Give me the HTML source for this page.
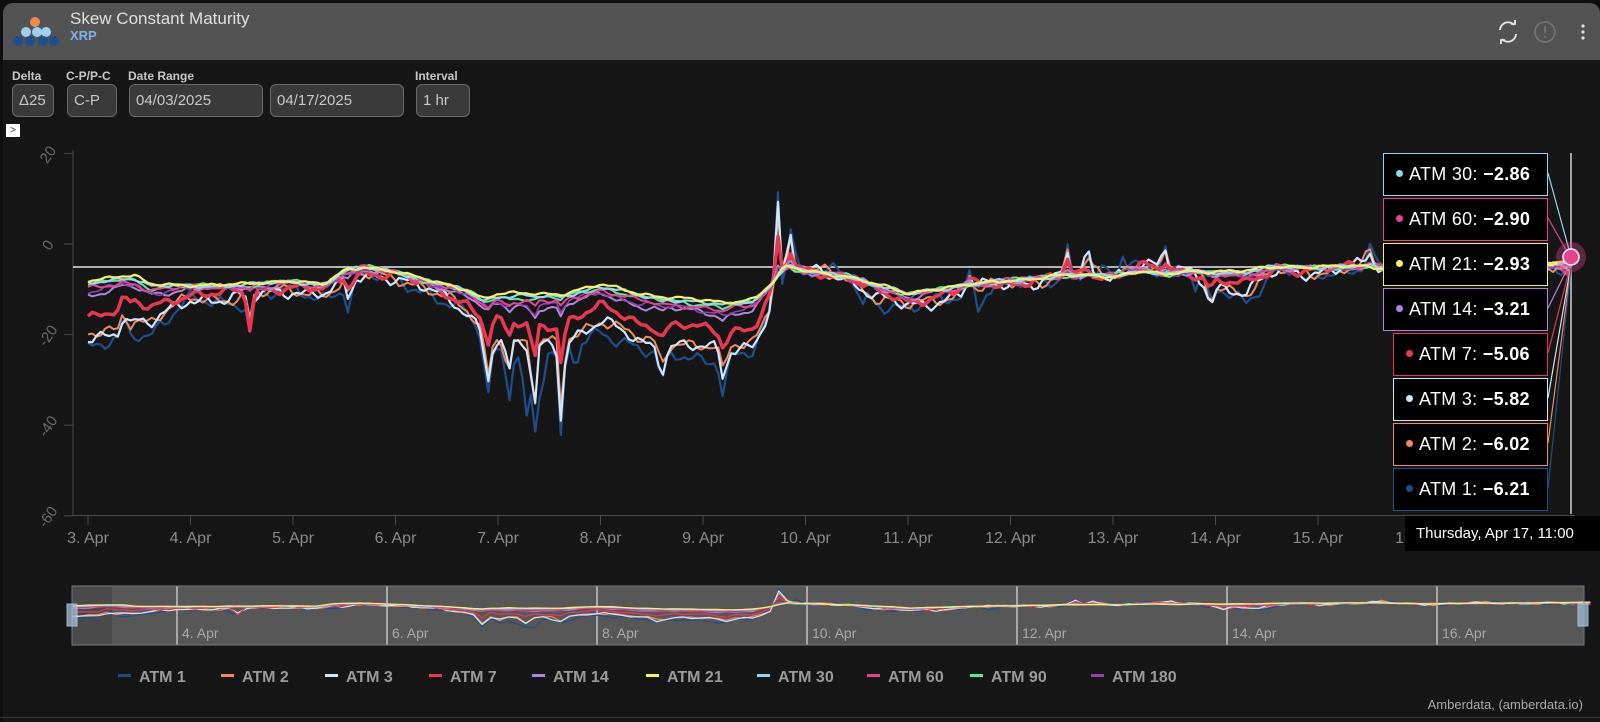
<!DOCTYPE html>
<html><head><meta charset="utf-8">
<style>
*{margin:0;padding:0;box-sizing:border-box}
html,body{width:1600px;height:722px;overflow:hidden;background:#0e0e0e;font-family:"Liberation Sans",sans-serif}
#panel{position:absolute;left:3px;top:3px;width:1597px;height:719px;background:#161616;border-radius:10px 10px 0 0;overflow:hidden}
#hdr{position:absolute;left:0;top:0;width:100%;height:57px;background:#535353}
.t1{position:absolute;left:67px;top:6px;font-size:17px;color:#e0e0e0}
.t2{position:absolute;left:67px;top:25px;font-size:13px;color:#7fb2e8;font-weight:bold}
.lbl{position:absolute;top:66px;font-size:12px;font-weight:bold;color:#c8c8c8}
.inp{position:absolute;top:81px;height:33px;border:1px solid #6a6a6a;border-radius:6px;background:#3a3a3a;color:#c8c8c8;font-size:15px;line-height:31px;padding-left:6px}
svg{position:absolute;left:0;top:0}
.tip{position:absolute;height:43px;background:#000;border:1.5px solid;color:#fff;font-size:18px;line-height:40px;padding-left:12px;white-space:nowrap;letter-spacing:0.3px}
.tip i{display:inline-block;width:7px;height:7px;border-radius:50%;margin-right:6px;vertical-align:3px}
.tip b{font-weight:bold}
.leg{position:absolute;top:669px;font-size:16px;font-weight:bold;color:#9a9a9a;white-space:nowrap}
.leg s{display:inline-block;width:13px;height:3px;vertical-align:5px;margin-right:8px;text-decoration:none}
</style></head><body>
<div id="panel">
<div id="hdr">
 <div class="t1">Skew Constant Maturity</div>
 <div class="t2">XRP</div>
</div>
<div class="lbl" style="left:9px">Delta</div>
<div class="lbl" style="left:63px">C-P/P-C</div>
<div class="lbl" style="left:125px">Date Range</div>
<div class="lbl" style="left:412px">Interval</div>
<div class="inp" style="left:9px;width:42px">Δ25</div>
<div class="inp" style="left:64px;width:50px">C-P</div>
<div class="inp" style="left:126px;width:134px">04/03/2025</div>
<div class="inp" style="left:267px;width:134px">04/17/2025</div>
<div class="inp" style="left:413px;width:54px">1 hr</div>
<div style="position:absolute;left:3px;top:121px;width:14px;height:13px;background:#fff;color:#333;font-size:10px;line-height:13px;text-align:center">&gt;</div>
</div>
<svg id="s" width="1600" height="722" xmlns="http://www.w3.org/2000/svg">
 <circle cx="35" cy="22" r="5" fill="#f08a4b"/>
 <circle cx="26" cy="32" r="5" fill="#9fd0ef"/><circle cx="37" cy="32" r="5" fill="#9fd0ef"/><circle cx="46" cy="32" r="5" fill="#9fd0ef"/>
 <circle cx="18" cy="41" r="5" fill="#1f4e8c"/><circle cx="30" cy="41" r="5" fill="#1f4e8c"/><circle cx="43" cy="41" r="5" fill="#1f4e8c"/><circle cx="54" cy="41" r="5" fill="#1f4e8c"/>
 <g fill="none" stroke="#e6e6e6" stroke-width="1.8">
  <path d="M1500 30a8 8 0 0 1 14-5M1516 34a8 8 0 0 1-14 5"/>
  <path d="M1511 24h4v-4M1505 40h-4v4"/>
 </g>
 <circle cx="1545" cy="32" r="10" fill="none" stroke="#777" stroke-width="1.5"/>
 <line x1="1545" y1="26" x2="1545" y2="33" stroke="#777" stroke-width="1.6"/><circle cx="1545" cy="37" r="1" fill="#777"/>
 <circle cx="1583" cy="26" r="1.6" fill="#ddd"/><circle cx="1583" cy="32" r="1.6" fill="#ddd"/><circle cx="1583" cy="38" r="1.6" fill="#ddd"/>
 <line x1="73" y1="150" x2="73" y2="516" stroke="#4a4a4a"/>
 <line x1="73" y1="515.5" x2="1575" y2="515.5" stroke="#4a4a4a"/>
 <g stroke="#4a4a4a" id="ticks"></g>
 <g fill="#6a6a6a" font-size="15" id="ylab"></g>
 <g fill="#8a8a8a" font-size="16" id="xlab"></g>
 <line x1="73" y1="267" x2="1570" y2="267" stroke="#e8e8e8" stroke-width="1.6"/>
 <defs><clipPath id="cp"><rect x="74" y="140" width="1500" height="375"/></clipPath></defs>
 <g id="lines" clip-path="url(#cp)" fill="none" stroke-linejoin="round"></g>
 <rect x="72" y="586" width="1512" height="59" fill="#575757"/>
 <rect x="72" y="586" width="40" height="59" fill="#4a4a4a"/>
 <g id="navt"></g>
 <g id="nav" fill="none" stroke-width="1.2"></g>
 <rect x="72" y="586" width="1512" height="59" fill="none" stroke="#6f7a86"/>
 <rect x="67" y="604" width="10" height="22" fill="#9bb7d2" stroke="#c8d8ea" opacity=".8"/>
 <rect x="1578" y="604" width="10" height="22" fill="#9bb7d2" stroke="#c8d8ea" opacity=".8"/>
 <line x1="0" y1="717.5" x2="1600" y2="717.5" stroke="#3a3a3a"/>
 <text x="1583" y="709" fill="#aaa" font-size="13" text-anchor="end">Amberdata, (amberdata.io)</text>
 <line x1="1571" y1="153" x2="1571" y2="514" stroke="#d0d0d0" stroke-width="1.5"/>
 <g id="conn" stroke-width="1.2"></g>
 <circle cx="1571" cy="257" r="15" fill="#e84393" opacity=".35"/>
 <circle cx="1571" cy="257" r="8" fill="#e84393" stroke="#fff" stroke-width="1.5"/>
</svg>
<div id="tips"></div>
<div style="position:absolute;left:1405px;top:516px;width:195px;height:35px;background:#000;color:#fff;font-size:15px;line-height:35px;padding-left:11px">Thursday, Apr 17, 11:00</div>
<div id="legend">
<div class="leg" style="left:118px"><s style="background:#1f4e8c"></s>ATM 1</div>
<div class="leg" style="left:221px"><s style="background:#f08a5d"></s>ATM 2</div>
<div class="leg" style="left:325px"><s style="background:#cfe6ff"></s>ATM 3</div>
<div class="leg" style="left:429px"><s style="background:#e8384f"></s>ATM 7</div>
<div class="leg" style="left:532px"><s style="background:#b185db"></s>ATM 14</div>
<div class="leg" style="left:646px"><s style="background:#f5f26a"></s>ATM 21</div>
<div class="leg" style="left:757px"><s style="background:#8fd9f0"></s>ATM 30</div>
<div class="leg" style="left:867px"><s style="background:#e84393"></s>ATM 60</div>
<div class="leg" style="left:970px"><s style="background:#5ee89a"></s>ATM 90</div>
<div class="leg" style="left:1091px"><s style="background:#8e44ad"></s>ATM 180</div>
</div>
<script>
var NS="http://www.w3.org/2000/svg";
function el(p,t,a,txt){var e=document.createElementNS(NS,t);for(var k in a)e.setAttribute(k,a[k]);if(txt)e.textContent=txt;document.getElementById(p).appendChild(e);return e;}
function Y(v){return 244-v*4.53}
function X(d){return 88+d*102.5}
[20,0,-20,-40,-60].forEach(function(v){var y=Y(v);el("ticks","line",{x1:64,y1:y,x2:73,y2:y});
 el("ylab","text",{x:0,y:0,transform:"translate(52,"+(y+4)+") rotate(-55)","text-anchor":"middle"},""+v);});
var days=["3. Apr","4. Apr","5. Apr","6. Apr","7. Apr","8. Apr","9. Apr","10. Apr","11. Apr","12. Apr","13. Apr","14. Apr","15. Apr","16. Apr"];
days.forEach(function(s,i){var x=X(i);el("ticks","line",{x1:x,y1:516,x2:x,y2:525});el("xlab","text",{x:x,y:543,"text-anchor":"middle"},s);});
var K=[[0,-8,-21],[0.3,-7,-19],[0.45,-7,-17],[0.6,-9,-18],[1,-9,-12],[1.5,-9,-12],[2,-8,-10],[2.3,-9,-11],[2.5,-6,-9],[2.7,-5,-7],[3,-6,-7],[3.3,-8,-10],[3.7,-10,-15],[3.85,-12,-19],[4,-11,-21],[4.3,-11,-23],[4.6,-11,-22],[5,-9,-17],[5.4,-11,-22],[5.8,-12,-22],[6.2,-13,-24],[6.5,-12,-22],[6.7,-8,-11],[6.8,-5,-5],[7,-6,-6],[7.4,-7,-7],[7.7,-9,-12],[8,-11,-14],[8.2,-10,-13],[8.6,-9,-10],[9,-8,-9],[9.5,-7,-7],[10,-7,-7],[10.3,-6,-4],[10.5,-7,-6],[10.7,-6,-6],[11,-6,-9],[11.3,-6,-11],[11.6,-5,-6],[12,-5,-6],[12.5,-5,-5],[13,-6,-6],[13.5,-5,-5],[14,-5,-5],[14.46,-4,-6]];
function base(t){for(var i=1;i<K.length;i++){if(t<=K[i][0]){var a=K[i-1],b=K[i],f=(t-a[0])/(b[0]-a[0]);return [a[1]+(b[1]-a[1])*f,a[2]+(b[2]-a[2])*f];}}var l=K[K.length-1];return [l[1],l[2]];}
var SP=[[0.35,0.03,4],[1.58,0.03,-6],[2.55,0.03,-5],[3.9,0.04,-10],[4.1,0.03,-8],[4.35,0.03,-16],[4.62,0.03,-17],[5.6,0.05,-5],[6.2,0.04,-6],[6.72,0.025,22],[6.85,0.03,7],[8.6,0.04,3],[9.55,0.03,6],[9.75,0.04,4],[10.5,0.03,5],[10.95,0.04,-4],[12.5,0.04,3]];
var S=[["#1f4e8c",1.2,2.2,1],["#f08a5d",0.95,2,2],["#cfe6ff",1,2.2,3],["#e8384f",0.6,3.5,4],["#b185db",0.25,2,5],["#8e44ad",0.2,1.6,6],["#5ee89a",0.08,2,7],["#e84393",0.15,2,8],["#8fd9f0",0.05,2.2,9],["#f5f26a",0,2.2,10]];
var N=348,tmax=14.46;
S.forEach(function(s){var k=s[1],seed=s[3],pts=[],v=[];
 for(var i=0;i<=N;i++){var t=i/N*tmax;var b=base(t);var val=b[0]+(b[1]-b[0])*k;
  var amp=0.4+k*1.1;
  val+=amp*(Math.sin(t*19+seed*1.7)*0.6+Math.sin(t*43+seed*3.1)*0.35+Math.sin(t*7+seed)*0.5);
  SP.forEach(function(p){var d=(t-p[0])/p[1];val+=p[2]*Math.pow(k,1.3)*Math.exp(-d*d);});
  if(seed==1){[[4.27,-14],[4.42,-10],[4.76,-6],[7.55,-5],[8.7,-5],[10.1,4],[10.8,-4],[6.9,4]].forEach(function(p){var d=(t-p[0])/0.03;val+=p[1]*Math.exp(-d*d);});}
  if(seed==4){var d=(t-1.58)/0.04;val-=5*Math.exp(-d*d);}
  v.push(val);pts.push(X(t).toFixed(1)+","+Y(val).toFixed(1));}
 el("lines","polyline",{points:pts.join(" "),stroke:s[0],"stroke-width":s[2]});
 var np=[];for(var i=0;i<=N;i+=2){var t=i/N*tmax;np.push((72+t*105).toFixed(1)+","+(603-(v[i]+5)*0.85).toFixed(1));}
 el("nav","polyline",{points:np.join(" "),stroke:s[0]});
});
for(var d=1;d<14;d+=2){var x=72+d*105;el("navt","line",{x1:x,y1:586,x2:x,y2:645,stroke:"#ddd","stroke-width":1.2});
 el("navt","text",{x:x+5,y:638,fill:"#aaa","font-size":14},(d+3)+". Apr");}
var T=[["#8fd9f0","ATM 30","−2.86",1383],["#e84393","ATM 60","−2.90",1383],["#f5f26a","ATM 21","−2.93",1383],["#b185db","ATM 14","−3.21",1383],["#e8384f","ATM 7","−5.06",1393],["#cfe6ff","ATM 3","−5.82",1393],["#f08a5d","ATM 2","−6.02",1393],["#1f4e8c","ATM 1","−6.21",1393]];
var h="";T.forEach(function(r,i){var top=153+i*45;
 h+='<div class="tip" style="left:'+r[3]+'px;top:'+top+'px;width:'+(1548-r[3])+'px;border-color:'+r[0]+'"><i style="background:'+r[0]+'"></i>'+r[1]+': <b>'+r[2]+'</b></div>';
 el("conn","line",{x1:1548,y1:top+20,x2:1571,y2:257+i*1.5,stroke:r[0]});});
document.getElementById("tips").innerHTML=h;
</script>
</body></html>
